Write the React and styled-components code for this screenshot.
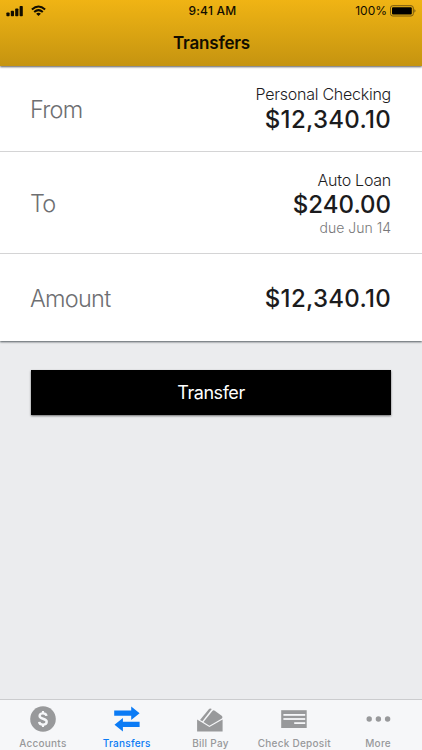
import React, { useState } from "react";
import styled, { createGlobalStyle } from "styled-components";

const GlobalStyle = createGlobalStyle`
    * {
        box-sizing: border-box;
    }
    body {
        margin: 0;
        background: #ebecee;
        font-family: Inter, "Liberation Sans", sans-serif;
    }
`;

const Screen = styled.div`
    display: flex;
    flex-direction: column;
    width: 422px;
    height: 750px;
    overflow: hidden;
    background: #ebecee;
`;

const Header = styled.header`
    flex: none;
    height: 66px;
    background: linear-gradient(#f0b414, #c59410);
    box-shadow: 0 1px 2px rgba(0, 0, 0, 0.65);
    z-index: 1;
`;

const StatusBar = styled.div`
    display: grid;
    grid-template-columns: 1fr auto 1fr;
    align-items: center;
    height: 22px;
    padding: 0 5px 0 6px;
    color: #120d00;
`;

const StatusGroup = styled.div`
    display: flex;
    align-items: center;
    justify-content: ${(props) => (props.$end ? "flex-end" : "flex-start")};
    gap: ${(props) => props.$gap}px;
`;

const StatusText = styled.span`
    padding-left: ${(props) => props.$indent || 0}px;
    font-size: 12px;
    line-height: 22px;
    font-weight: ${(props) => props.$weight};
    letter-spacing: ${(props) => props.$spacing}px;
    white-space: nowrap;
`;

const Title = styled.h1`
    margin: 0;
    padding: 11px 0 0 1px;
    font-size: 17px;
    line-height: 20px;
    font-weight: 600;
    letter-spacing: -0.2px;
    text-align: center;
    color: #120d00;
`;

const Form = styled.main`
    flex: none;
    background: #fff;
    box-shadow: 0 1px 2px rgba(30, 40, 45, 0.75);
`;

const Row = styled.div`
    display: flex;
    align-items: center;
    justify-content: space-between;
    height: ${(props) => props.$height}px;
    padding: ${(props) => (props.$last ? "2px 31px 0 30px" : "0 31px 0 30px")};
    border-bottom: ${(props) => (props.$last ? "none" : "1px solid #d4d4d5")};
`;

const Label = styled.span`
    padding-top: ${(props) => (props.$last ? 0 : 2)}px;
    font-size: 23.5px;
    line-height: 28px;
    font-weight: 300;
    letter-spacing: -0.75px;
    color: #6e6f72;
`;

const Value = styled.div`
    display: flex;
    flex-direction: column;
    align-items: flex-end;
    white-space: nowrap;
`;

const Account = styled.span`
    font-size: 16px;
    line-height: ${(props) => props.$lineHeight || 22}px;
    font-weight: 300;
    letter-spacing: -0.25px;
    color: #1c1c1e;
`;

const Money = styled.span`
    font-size: 24px;
    line-height: 28px;
    font-weight: 500;
    letter-spacing: ${(props) => props.$spacing || 0}px;
    color: #1b1b1d;
`;

const Due = styled.span`
    font-size: 14px;
    line-height: 18px;
    font-weight: 300;
    color: #77787a;
`;

const SubmitButton = styled.button`
    flex: none;
    height: 45px;
    margin: 29px 31px 0;
    padding: 0;
    border: none;
    background: #000;
    box-shadow: 0 1px 2px rgba(0, 0, 0, 0.55);
    color: #fff;
    font-family: inherit;
    font-size: 18px;
    font-weight: 400;
    letter-spacing: -0.45px;
    cursor: pointer;
`;

const TabBar = styled.nav`
    display: grid;
    grid-template-columns: repeat(5, 1fr);
    flex: none;
    height: 51px;
    margin-top: auto;
    padding: 0 2px 0 1px;
    border-top: 1px solid #cbccce;
    background: #f6f7f9;
`;

const Tab = styled.button`
    display: flex;
    flex-direction: column;
    align-items: center;
    padding: 5px 0 0;
    border: none;
    background: none;
    color: ${(props) => (props.$active ? "#0b7bf5" : "#98999b")};
    font-family: inherit;
    font-size: 10px;
    line-height: 12px;
    font-weight: 500;
    letter-spacing: 0.25px;
    white-space: nowrap;
    cursor: pointer;
    svg {
        display: block;
        margin-bottom: 4px;
    }
`;

const SignalIcon = () => (
    <svg width="18" height="12" viewBox="0 0 18 12" fill="currentColor">
        <rect x="0.4" y="7.5" width="3.2" height="3.8" rx="0.8" />
        <rect x="4.8" y="5.7" width="3.2" height="5.6" rx="0.8" />
        <rect x="9.2" y="3.5" width="3.2" height="7.8" rx="0.8" />
        <rect x="13.6" y="1" width="3.2" height="10.3" rx="0.8" />
    </svg>
);

const WifiIcon = () => (
    <svg width="15" height="12" viewBox="0 0 15 12">
        <g fill="none" stroke="currentColor" strokeWidth="2">
            <path d="M0.9 4.5Q7.5 -1.4 14.1 4.5" />
            <path d="M3.2 7Q7.5 3.3 11.8 7" />
        </g>
        <path d="M5.1 8.7Q7.5 6.8 9.9 8.7L7.5 11.1Z" fill="currentColor" />
    </svg>
);

const BatteryIcon = () => (
    <svg width="27" height="12" viewBox="0 0 27 12">
        <rect x="0.5" y="0.7" width="22.8" height="10.3" rx="2.3" fill="none" stroke="#765910" />
        <rect x="2" y="2.2" width="19.8" height="7.3" rx="1" fill="#000" />
        <path d="M24.4 4Q26.6 5.8 24.4 7.7Z" fill="#765910" />
    </svg>
);

const AccountsIcon = () => (
    <svg width="28" height="28" viewBox="0 0 28 28">
        <circle cx="14" cy="14" r="12.8" fill="currentColor" />
        <g fill="none" stroke="#f6f7f9">
            <path
                d="M17.5 10.9C17.2 9.2 15.9 8.4 14 8.4C11.9 8.4 10.6 9.4 10.6 11C10.6 14.6 17.7 12.9 17.7 16.8C17.7 18.6 16.3 19.7 14 19.7C11.8 19.7 10.4 18.6 10.2 16.9"
                strokeWidth="2.4"
            />
            <path d="M14 6V9M14 19V22" strokeWidth="2.1" />
        </g>
    </svg>
);

const TransfersIcon = () => (
    <svg width="28" height="28" viewBox="0 0 28 28" fill="currentColor">
        <path d="M1.2 5.6H18.2V1.6L26.6 8.3L18.2 14.9V10.7H1.2Z" />
        <path d="M26.6 16.7H9.9V12.9L1.5 19.7L9.9 26.4V22H26.6Z" />
    </svg>
);

const BillPayIcon = () => (
    <svg width="28" height="28" viewBox="0 0 28 28" fill="currentColor">
        <path d="M1.1 14.6L13.4 22.1L26.6 14.6V26.6H1.1Z" />
        <path d="M4 14.9L12.6 4.4Q14 3 15.8 4.1L6.4 16.3Z" />
        <path d="M7.5 17L16.4 5.9Q17.4 4.9 18.8 5.7L26 11Q27 12.2 25.9 13.6L13.4 20.7Z" />
    </svg>
);

const CheckDepositIcon = () => (
    <svg width="28" height="28" viewBox="0 0 28 28">
        <rect x="1.2" y="5.2" width="25.5" height="17.8" fill="currentColor" />
        <g fill="#f6f7f9">
            <rect x="3.4" y="9" width="21.8" height="1.8" />
            <rect x="3.4" y="13.1" width="21.8" height="1.8" />
            <rect x="14.2" y="17.2" width="11" height="1.8" />
        </g>
    </svg>
);

const MoreIcon = () => (
    <svg width="28" height="28" viewBox="0 0 28 28" fill="currentColor">
        <circle cx="5.2" cy="14" r="2.7" />
        <circle cx="14.4" cy="14" r="2.7" />
        <circle cx="23.6" cy="14" r="2.7" />
    </svg>
);

const tabs = [
    { name: "Accounts", icon: AccountsIcon },
    { name: "Transfers", icon: TransfersIcon },
    { name: "Bill Pay", icon: BillPayIcon },
    { name: "Check Deposit", icon: CheckDepositIcon },
    { name: "More", icon: MoreIcon },
];

const App = () => {
    const [activeTab, setActiveTab] = useState("Transfers");

    return (
        <Screen>
            <GlobalStyle />
            <Header>
                <StatusBar>
                    <StatusGroup $gap={7}>
                        <SignalIcon />
                        <WifiIcon />
                    </StatusGroup>
                    <StatusText $weight={500} $spacing={0.25} $indent={2}>9:41 AM</StatusText>
                    <StatusGroup $end $gap={3}>
                        <StatusText $weight={400} $spacing={0}>100%</StatusText>
                        <BatteryIcon />
                    </StatusGroup>
                </StatusBar>
                <Title>Transfers</Title>
            </Header>
            <Form>
                <Row $height={86}>
                    <Label>From</Label>
                    <Value>
                        <Account $lineHeight={23}>Personal Checking</Account>
                        <Money $spacing={0.3}>$12,340.10</Money>
                    </Value>
                </Row>
                <Row $height={102}>
                    <Label>To</Label>
                    <Value>
                        <Account>Auto Loan</Account>
                        <Money>$240.00</Money>
                        <Due>due Jun 14</Due>
                    </Value>
                </Row>
                <Row $height={87} $last>
                    <Label $last>Amount</Label>
                    <Money $spacing={0.3}>$12,340.10</Money>
                </Row>
            </Form>
            <SubmitButton type="button">Transfer</SubmitButton>
            <TabBar>
                {tabs.map(({ name, icon: Icon }) => (
                    <Tab
                        key={name}
                        type="button"
                        $active={name === activeTab}
                        onClick={() => setActiveTab(name)}
                    >
                        <Icon />
                        {name}
                    </Tab>
                ))}
            </TabBar>
        </Screen>
    );
};

export default App;
